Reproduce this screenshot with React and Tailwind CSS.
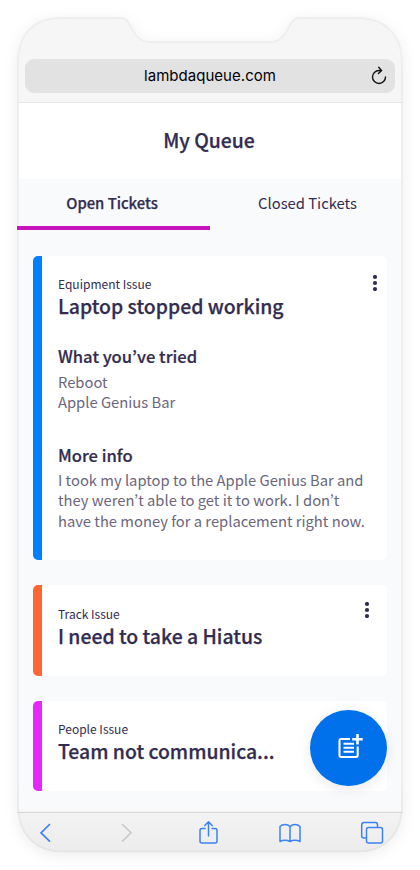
const outline =
  'M60 18H122C132 18 131 42 150 42H270C289 42 288 18 298 18H358C384 18 402 34 402 63V804C402 835 384 851.5 358 851.5H62C36 851.5 18 835 18 804V63C18 34 34 18 60 18Z';

function PhoneBody() {
  return (
    <svg className="absolute inset-0 h-[870px] w-[420px]" viewBox="0 0 420 870" fill="none">
      <defs>
        <linearGradient id="body" x1="0" y1="811" x2="0" y2="852" gradientUnits="userSpaceOnUse">
          <stop offset="0" stopColor="#f6f6f6" />
          <stop offset="0.02" stopColor="#f3f3f3" />
          <stop offset="1" stopColor="#ececec" />
        </linearGradient>
        <linearGradient id="edge" x1="0" y1="780" x2="0" y2="852" gradientUnits="userSpaceOnUse">
          <stop offset="0" stopColor="#eeeeee" />
          <stop offset="1" stopColor="#e4e4e4" />
        </linearGradient>
        <filter id="shade" x="-20%" y="-20%" width="140%" height="140%">
          <feDropShadow dx="0" dy="3" stdDeviation="7" floodColor="#000" floodOpacity="0.07" />
        </filter>
      </defs>
      <path d={outline} fill="url(#body)" stroke="url(#edge)" strokeWidth="2" filter="url(#shade)" />
    </svg>
  );
}

function Dots() {
  return (
    <svg className="block h-4 w-1.5" viewBox="0 0 6 16" fill="#322c50">
      <circle cx="3" cy="2" r="2.1" />
      <circle cx="3" cy="8" r="2.1" />
      <circle cx="3" cy="14" r="2.1" />
    </svg>
  );
}

function Ticket({ kind, title, color, size, menu, children }) {
  return (
    <article className={`flex w-[353.5px] shrink-0 overflow-hidden rounded-[5px] bg-white ${size}`}>
      <div className={`w-[8.7px] shrink-0 ${color}`} />
      <div className="relative flex-1 pl-4 pt-[19.5px]">
        <p className="text-[12px] leading-[18px]">{kind}</p>
        <h2 className="text-[19.4px] font-medium leading-[26px] [-webkit-text-stroke:0.25px_#322c50]">{title}</h2>
        {children}
        {menu && <div className={`absolute ${menu}`}><Dots /></div>}
      </div>
    </article>
  );
}

export default function App() {
  return (
    <div className="relative h-[870px] w-[420px] overflow-hidden bg-white font-['Noto_Sans_CJK_KR',sans-serif] text-[#322c50]">
      <PhoneBody />
      <div className="relative flex h-full flex-col px-[17px] pb-[18px] pt-[59px]">
        <div className="mx-2 flex h-[34px] shrink-0 items-center rounded-[9px] bg-[#e2e2e2]">
          <span className="flex-1 pl-[29px] text-center font-['Inter',sans-serif] text-[15px] tracking-[0.03px] text-black">lambdaqueue.com</span>
          <svg className="mr-1.5 h-5 w-[23px]" viewBox="0 0 23 20" fill="none" stroke="#111" strokeWidth="1.4" strokeLinecap="round" strokeLinejoin="round">
            <path d="M19.500 11a6.500 6.500 0 1 1-6.500-6.500h2.500M12.700 1.200l3 3.400-3.300 3" />
          </svg>
        </div>

        <div className="mt-[9px] h-px shrink-0 bg-[#e6e6e6]" />
        <header className="mx-0.5 flex h-[76px] shrink-0 items-center justify-center bg-white pb-0.5 pr-0.5">
          <h1 className="text-[19.4px] font-medium leading-7 [-webkit-text-stroke:0.25px_#322c50]">My Queue</h1>
        </header>

        <nav className="mx-0.5 flex h-[51px] shrink-0 bg-[#f9fafc] text-[14.8px]">
          <div className="-ml-0.5 flex w-[193px] shrink-0 items-center justify-center border-b-4 border-[#c714bd] pr-[3px] pt-0.5 font-medium [-webkit-text-stroke:0.25px_#322c50]">Open Tickets</div>
          <div className="flex flex-1 items-center justify-center border-b-4 border-transparent pl-1 pt-0.5">Closed Tickets</div>
        </nav>

        <main className="relative mx-0.5 flex h-[580px] shrink-0 flex-col gap-[24.6px] bg-[#f9fafc] pl-[14.3px] pt-[25.7px]">
          <Ticket kind="Equipment Issue" title="Laptop stopped working" color="bg-[#007fff]" size="h-[304.8px]" menu="right-[8.7px] top-[19px]">
            <h3 className="mt-[24.6px] text-[16.6px] font-medium leading-6 [-webkit-text-stroke:0.2px_#322c50]">What you’ve tried</h3>
            <p className="mt-[3.8px] text-[14.75px] leading-[20.7px] text-[#6b667e]">Reboot<br />Apple Genius Bar</p>
            <h3 className="mt-[29.6px] text-[16.6px] font-medium leading-6 [-webkit-text-stroke:0.2px_#322c50]">More info</h3>
            <p className="mt-[3.4px] whitespace-nowrap text-[14.75px] leading-[20.5px] text-[#6b667e]">
              I took my laptop to the Apple Genius Bar and<br />they weren’t able to get it to work. I don’t<br />have the money for a replacement right now.
            </p>
          </Ticket>
          <Ticket kind="Track Issue" title="I need to take a Hiatus" color="bg-[#ff6633]" size="h-[91px]" menu="right-[16.8px] top-[17px]" />
          <Ticket kind="People Issue" title="Team not communica..." color="bg-[#e827ff]" size="h-[90.6px]" />
          <button className="absolute bottom-[23.7px] right-[14.3px] flex size-[76.5px] items-center justify-center rounded-full bg-[#0070eb] shadow-[0_3px_14px_rgba(0,0,0,0.09)]">
            <svg className="mb-1 ml-0.5 h-[26px] w-[27px]" viewBox="0 0 27 26" fill="none" stroke="#fff" strokeWidth="2.1">
              <path d="M14 6H5.200Q3.500 6 3.500 7.700V22.300Q3.500 24 5.200 24H20Q21.700 24 21.700 22.300V13.500M7.500 10.700h10.500M7.500 14.700h10.500M7.500 18.700h10.500" />
              <path strokeWidth="2.6" d="M21.500 1v10.500M16.200 6.200h10.500" />
            </svg>
          </button>
        </main>

        <div className="mx-0.5 h-0.5 shrink-0 bg-[#f6f6f6]" />
        <footer className="h-[40px] shrink-0 border-t border-[#d6d6d6]">
          <svg className="h-[39px] w-[386px]" viewBox="17 813 386 39" fill="none" stroke="#3b82f6" strokeWidth="1.5" strokeLinecap="round" strokeLinejoin="round">
            <path strokeWidth="1.7" d="M49.5 824.5l-8.5 8.3 8.5 8.3" />
            <path stroke="#c6c6c6" d="M122.5 824.5l8.5 8.3-8.5 8.3" />
            <path d="M205 828.5h-3Q200 828.5 200 830.5V841Q200 843 202 843H215Q217 843 217 841V830.5Q217 828.5 215 828.5H212M208.5 836V822M204.8 825.6l3.7-3.8 3.7 3.8" />
            <path d="M290 826.5Q288 824.5 285 824.5T280 826.5V841.5Q282 840.3 285 840.3T290 841.5Q292 840.3 295 840.3T300 841.5V826.5Q298 824.5 295 824.5T290 826.5V841.5" />
            <path d="M366 838H364Q361.700 838 361.700 836V825Q361.700 822.500 364 822.500H375.500Q377.500 822.500 377.500 825V827" />
            <rect x="366.500" y="827.400" width="16" height="15.600" rx="2" />
          </svg>
        </footer>
      </div>
    </div>
  );
}
